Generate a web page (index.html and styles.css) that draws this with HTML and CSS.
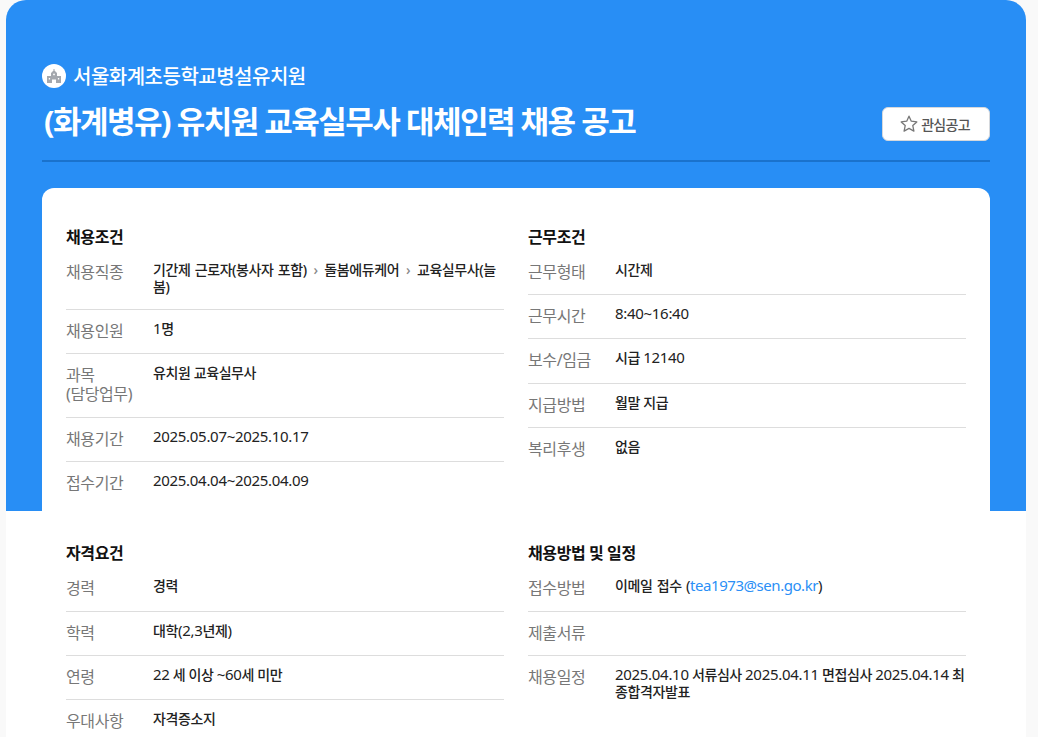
FILE: index.html
```html
<!DOCTYPE html>
<html lang="ko">
<head>
  <meta charset="UTF-8">
  <title>채용 공고</title>
  <meta name="viewport" content="width=device-width, initial-scale=1.0">
  <link rel="stylesheet" href="styles.css">
</head>
<body>
  <div class="panel">
    <!-- Header -->
    <header class="head">
      <div class="org">
        <span class="org-icon">
          <svg width="16" height="14" viewBox="0 0 16 14" fill="#a4a8ae">
            <path d="M7.5 0h1v1.6L11 4v3h4v7h-5v-3.5H6V14H1V7h4V4l2.5-2.4z"/>
            <circle cx="8" cy="5.4" r="0.9" fill="#fff"/>
            <path fill="#fff" d="M2.8 9h1.3v1.5H2.8zM11.9 9h1.3v1.5h-1.3z"/>
          </svg>
        </span>
        <span class="org-name">서울화계초등학교병설유치원</span>
      </div>
      <div class="title-row">
        <h1>(화계병유) 유치원 교육실무사 대체인력 채용 공고</h1>
        <button class="fav">
          <svg width="18" height="18" viewBox="0 0 18 18" fill="none" stroke="#777" stroke-width="1.3" stroke-linejoin="round">
            <path d="M9 1.2l2.3 5 5.5.7-4 3.7 1.1 5.5L9 13.4l-4.9 2.7 1.1-5.5-4-3.7 5.5-.7z"/>
          </svg>
          관심공고
        </button>
      </div>
    </header>

    <!-- Details -->
    <div class="card">
      <section class="group">
        <h2>채용조건</h2>
        <div class="row"><span class="label">채용직종</span><span class="value spaced">기간제 근로자(봉사자 포함) <i class="sep">›</i> 돌봄에듀케어 <i class="sep">›</i> 교육실무사(늘봄)</span></div>
        <div class="row"><span class="label">채용인원</span><span class="value"><span class="num">1</span>명</span></div>
        <div class="row"><span class="label">과목<br>(담당업무)</span><span class="value">유치원 교육실무사</span></div>
        <div class="row"><span class="label">채용기간</span><span class="value"><span class="num">2025.05.07~2025.10.17</span></span></div>
        <div class="row"><span class="label">접수기간</span><span class="value"><span class="num">2025.04.04~2025.04.09</span></span></div>
      </section>

      <section class="group">
        <h2>근무조건</h2>
        <div class="row"><span class="label">근무형태</span><span class="value">시간제</span></div>
        <div class="row"><span class="label">근무시간</span><span class="value"><span class="num">8:40~16:40</span></span></div>
        <div class="row"><span class="label">보수/임금</span><span class="value">시급 <span class="num">12140</span></span></div>
        <div class="row"><span class="label">지급방법</span><span class="value">월말 지급</span></div>
        <div class="row"><span class="label">복리후생</span><span class="value">없음</span></div>
      </section>

      <section class="group">
        <h2>자격요건</h2>
        <div class="row"><span class="label">경력</span><span class="value">경력</span></div>
        <div class="row"><span class="label">학력</span><span class="value">대학<span class="num">(2,3</span>년제<span class="num">)</span></span></div>
        <div class="row"><span class="label">연령</span><span class="value"><span class="num">22</span> 세 이상 <span class="num">~60</span>세 미만</span></div>
        <div class="row"><span class="label">우대사항</span><span class="value">자격증소지</span></div>
      </section>

      <section class="group">
        <h2>채용방법 및 일정</h2>
        <div class="row"><span class="label">접수방법</span><span class="value spaced">이메일 접수 <span class="num">(<a href="#">tea1973@sen.go.kr</a>)</span></span></div>
        <div class="row"><span class="label">제출서류</span><span class="value"></span></div>
        <div class="row"><span class="label">채용일정</span><span class="value"><span class="num">2025.04.10</span> 서류심사 <span class="num">2025.04.11</span> 면접심사 <span class="num">2025.04.14</span> 최종합격자발표</span></div>
      </section>
    </div>
  </div>
</body>
</html>
```

FILE: styles.css
```css
html, body {
  height: 737px;
  overflow: hidden;
}

body {
  font-family: "Noto Sans", "Noto Sans CJK KR", sans-serif;
  background: #f9f9f9;
  color: #222;
  margin: 0;
  padding: 0 12px 0 6px;
}

/* blue stops partway down the white card */
.panel {
  background: linear-gradient(#288ef5 511px, #fff 511px);
  border-radius: 20px 20px 0 0;
  padding: 64px 36px 0;
  height: 673px;
}

.org {
  display: flex;
  align-items: center;
  gap: 7px;
  height: 24px;
}

.org-icon {
  width: 24px;
  height: 24px;
  border-radius: 50%;
  background: #fff;
  display: flex;
  align-items: center;
  justify-content: center;
}

.org-name {
  font-size: 20px;
  font-weight: 500;
  color: #fff;
  letter-spacing: -0.5px;
  margin-bottom: 2px;
}

.title-row {
  display: flex;
  justify-content: space-between;
  align-items: flex-end;
  padding: 9px 0 19px;
  border-bottom: 2px solid #1a72cc;
  margin-bottom: 26px;
}

.title-row h1 {
  margin: 2px 0 -2px 2px;
  font-size: 31px;
  line-height: 44px;
  font-weight: 700;
  color: #fff;
  letter-spacing: -1.5px;
}

.fav {
  width: 108px;
  height: 34px;
  background: #fff;
  border: 1px solid #d5d8dc;
  border-radius: 6px;
  display: flex;
  align-items: center;
  justify-content: center;
  gap: 3px;
  font-family: inherit;
  font-size: 14px;
  font-weight: 500;
  letter-spacing: -0.7px;
  color: #555;
  padding: 0 2px 0 0;
}

.card {
  background: #fff;
  border-radius: 12px;
  padding: 39px 24px 0;
  display: grid;
  grid-template-columns: 1fr 1fr;
  column-gap: 24px;
  row-gap: 38.5px;
}

.group h2 {
  margin: 0 0 4px;
  font-size: 16px;
  line-height: 20px;
  font-weight: 700;
  color: #111;
  letter-spacing: -0.4px;
}

.row {
  display: flex;
  padding: 12px 0;
  border-bottom: 1px solid #ddd;
}

.row:last-child {
  border-bottom: none;
}

.label {
  flex: 0 0 87px;
  font-size: 16px;
  line-height: 1.2;
  color: #777;
  letter-spacing: -0.4px;
}

/* sits a little above the label's line */
.value {
  flex: 1;
  margin-top: -2px;
  padding-bottom: 2px;
  font-size: 14px;
  line-height: 17px;
  font-weight: 500;
  color: #222;
  letter-spacing: -0.4px;
}

.spaced {
  word-spacing: 1px;
}

.num {
  font-size: 15px;
  font-weight: 400;
  letter-spacing: -0.3px;
}

.value a {
  color: #2a8ff6;
  letter-spacing: -0.45px;
  text-decoration: none;
}

.sep {
  font-style: normal;
  color: #888;
  margin: 0 2.5px;
}
```
